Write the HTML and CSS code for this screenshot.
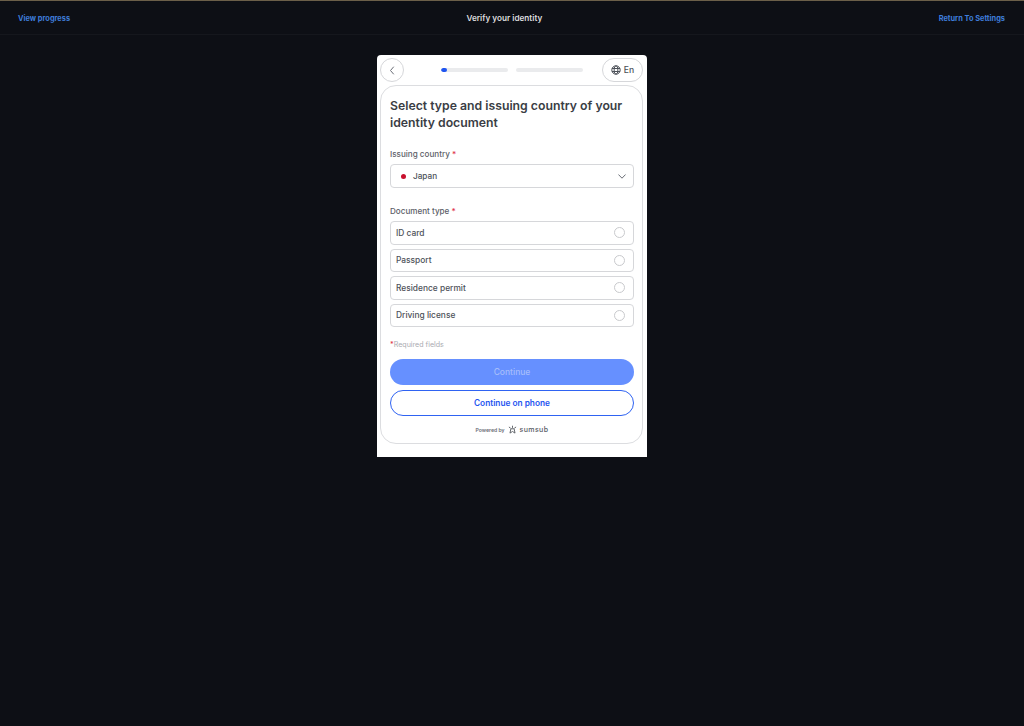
FILE: index.html
```html
<!DOCTYPE html>
<html lang="en">
<head>
<meta charset="utf-8">
<title>Verify your identity</title>
<link rel="stylesheet" href="styles.css">
</head>
<body>
<header class="topbar">
  <a class="link">View progress</a>
  <span class="title">Verify your identity</span>
  <a class="link">Return To Settings</a>
</header>
<main class="stage">
  <section class="widget">
    <div class="nav">
      <button class="back" aria-label="Back"><svg width="6" height="9" viewBox="0 0 6 9"><path d="M4.5 1 1.5 4.5l3 3.5" fill="none" stroke="#6a6e76" stroke-width="1" stroke-linecap="round" stroke-linejoin="round"/></svg></button>
      <div class="steps">
        <div class="step"><div class="step-fill"></div></div>
        <div class="step"></div>
      </div>
      <button class="lang"><svg width="10" height="10" viewBox="0 0 10 10" fill="none" stroke="#4d5159" stroke-width="1"><circle cx="5" cy="5" r="4.2"/><ellipse cx="5" cy="5" rx="1.9" ry="4.2"/><path d="M1 3.5h8M1 6.5h8"/></svg><span>En</span></button>
    </div>
    <div class="panel">
      <h1 class="heading">Select type and issuing country of your identity document</h1>
      <div class="label label-country">Issuing country <b class="req">*</b></div>
      <div class="select">
        <span class="flag"></span>
        <span class="select-text">Japan</span>
        <svg width="8" height="5" viewBox="0 0 8 5"><path d="M.7.8 4 4.2 7.3.8" fill="none" stroke="#6a6e76" stroke-width="1" stroke-linecap="round" stroke-linejoin="round"/></svg>
      </div>
      <div class="label label-type">Document type <b class="req">*</b></div>
      <div class="options">
        <div class="option"><span>ID card</span><i class="radio"></i></div>
        <div class="option"><span>Passport</span><i class="radio"></i></div>
        <div class="option"><span>Residence permit</span><i class="radio"></i></div>
        <div class="option"><span>Driving license</span><i class="radio"></i></div>
      </div>
      <div class="required"><b class="req">*</b>Required fields</div>
      <button class="btn btn-primary">Continue</button>
      <button class="btn btn-outline">Continue on phone</button>
      <div class="powered">
        <span>Powered by</span>
        <svg width="9" height="9" viewBox="0 0 10 10" fill="none" stroke="#55595f" stroke-width="1"><path d="M5 .8v2.4M1 2.2l2 1.4M9 2.2 7 3.6M3.2 4.2h3.6L7.8 9 5 7.2 2.2 9z"/></svg>
        <span class="brand">sumsub</span>
      </div>
    </div>
  </section>
</main>
</body>
</html>
```
FILE: styles.css
```css
* { box-sizing: border-box; }
html, body { height: 100%; }
body {
  margin: 0;
  background: #0d0f15;
  font-family: "Inter", "Liberation Sans", sans-serif;
  overflow: hidden;
}
.topbar {
  height: 35px;
  border-top: 1px solid #6b5f49;
  border-bottom: 1px solid #15171d;
  padding: 1px 19px 0 18px;
  display: flex;
  justify-content: space-between;
  align-items: center;
}
.link { font-size: 7.4px; font-weight: 700; color: #3f7ddb; }
.title { font-size: 8.2px; font-weight: 600; color: #dcdcde; }
.stage { display: flex; justify-content: center; padding-top: 20px; }
.widget {
  width: 270px;
  height: 402px;
  background: #fff;
  border-radius: 4px 4px 0 0;
  padding: 3px 4px 0 3px;
  color: #33363d;
}
.nav { height: 24px; display: grid; grid-template-columns: 1fr auto 1fr; align-items: center; }
button { font-family: inherit; background: none; padding: 0; }
.back {
  width: 24px; height: 24px; border: 1px solid #d6d7da; border-radius: 50%;
  display: flex; align-items: center; justify-content: center;
}
.steps { display: flex; gap: 8px; }
.step { width: 67px; height: 4px; border-radius: 2px; background: #eaebed; overflow: hidden; }
.step-fill { width: 6px; height: 4px; border-radius: 2px; background: #1f55f0; }
.lang {
  width: 41px; height: 24px; border: 1px solid #d6d7da; border-radius: 12px; justify-self: end;
  display: flex; align-items: center; justify-content: center; gap: 3px;
  font-size: 8.6px; font-weight: 500; color: #4d5159;
}
.panel {
  margin-top: 3px;
  height: 359px;
  border: 1px solid #dcdde0;
  border-radius: 16px;
  padding: 11px 8px 0 9px;
}
.heading { margin: 0; font-size: 12.25px; line-height: 17px; font-weight: 600; color: #3a3d44; }
.label { font-size: 8.1px; line-height: 12px; font-weight: 500; color: #5d6068; }
.label-country { margin-top: 17px; }
.label-type { margin-top: 17px; }
.req { color: #e0334a; font-weight: 500; }
.select {
  margin-top: 4px; height: 24px; border: 1px solid #d6d7da; border-radius: 4px;
  display: flex; align-items: center; padding: 0 7px 0 10px;
  font-size: 8.2px; font-weight: 500; color: #4d5159;
}
.flag { width: 5px; height: 5px; border-radius: 50%; background: #c8102e; }
.select-text { margin-left: 7px; flex: 1; }
.options { margin-top: 4px; display: flex; flex-direction: column; gap: 4px; }
.option {
  height: 23.5px; border: 1px solid #d6d7da; border-radius: 4px;
  display: flex; align-items: center; justify-content: space-between; padding: 0 8px 0 5px;
  font-size: 8.4px; font-weight: 500; color: #4d5159;
}
.radio { width: 11px; height: 11px; border: 1px solid #c9cacd; border-radius: 50%; }
.required { margin-top: 12px; font-size: 7.1px; line-height: 11px; color: #a8aab0; }
.btn {
  display: block; width: 100%; height: 26px; border-radius: 13px;
  font-size: 8.5px; font-weight: 600;
}
.btn-primary { margin-top: 9px; border: 0; background: #6690ff; color: #a5bdfb; font-weight: 500; }
.btn-outline { margin-top: 5px; border: 1px solid #2f63f2; color: #1f55f0; font-size: 8.3px; }
.powered {
  margin-top: 9px; display: flex; align-items: center; justify-content: center; gap: 3px;
  font-size: 5.1px; font-weight: 600; color: #6b6e75;
}
.brand { font-size: 7px; font-weight: 500; letter-spacing: .4px; color: #55595f; }
```
